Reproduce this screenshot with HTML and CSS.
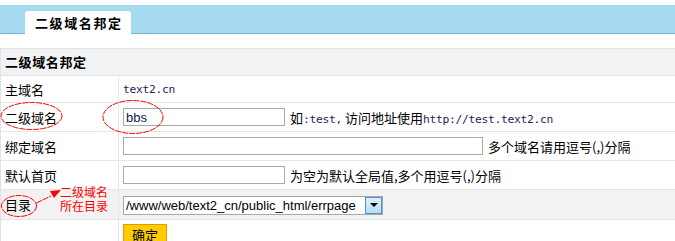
FILE: index.html
```html
<!DOCTYPE html>
<html lang="zh">
<head>
<meta charset="utf-8">
<title>二级域名邦定</title>
<link rel="stylesheet" href="styles.css">
</head>
<body>
<div class="page">
  <div class="topbar"><div class="tab">二级域名邦定</div></div>
  <div class="panel">
    <div class="panel-head">二级域名邦定</div>
    <div class="row r1">
      <div class="label">主域名</div>
      <div class="field"><span class="en">text2.cn</span></div>
    </div>
    <div class="row r2">
      <div class="label">二级域名</div>
      <div class="field"><input class="text short" type="text" value="bbs"><span class="hint">如<span class="en">:test,</span> 访问地址使用<span class="en">http://test.text2.cn</span></span></div>
    </div>
    <div class="row r3">
      <div class="label">绑定域名</div>
      <div class="field"><input class="text long" type="text" value=""><span class="hint">多个域名请用逗号(,)分隔</span></div>
    </div>
    <div class="row r4">
      <div class="label">默认首页</div>
      <div class="field"><input class="text short2" type="text" value=""><span class="hint">为空为默认全局值,多个用逗号(,)分隔</span></div>
    </div>
    <div class="row r5 alt">
      <div class="label">目录</div>
      <div class="field">
        <div class="select"><span class="select-value">/www/web/text2_cn/public_html/errpage</span><span class="select-btn"><span class="caret"></span></span></div>
      </div>
    </div>
    <div class="row r6">
      <div class="label"></div>
      <div class="field top"><button class="submit" type="button">确定</button></div>
    </div>
  </div>

  <svg class="marks" width="675" height="241" viewBox="0 0 675 241" xmlns="http://www.w3.org/2000/svg">
    <g fill="none" stroke="#ff0000" stroke-width="1" stroke-dasharray="6 1">
      <ellipse cx="31.5" cy="116" rx="30.5" ry="13.5"/>
      <ellipse cx="133" cy="117" rx="30" ry="16.5"/>
      <ellipse cx="19" cy="206" rx="17.5" ry="10.5"/>
      <path d="M36.5 203 L51 196"/>
    </g>
    <polygon points="50,191 61,190 54,198" fill="#ff0000"/>
  </svg>
  <div class="note">二级域名<br>所在目录</div>
</div>
</body>
</html>
```

FILE: styles.css
```css
* { box-sizing: border-box; }

html, body {
  margin: 0;
  padding: 0;
  background: #ffffff;
}

body {
  font-family: "Noto Sans CJK SC", "DejaVu Sans", sans-serif;
  font-size: 13px;
  color: #000000;
  overflow: hidden;
}

.page {
  position: relative;
  width: 675px;
  height: 241px;
  overflow: hidden;
}

.topbar {
  margin-top: 5px;
  height: 29px;
  background: #a5d9ef;
  border-bottom: 1px solid #70b7da;
  display: flex;
  align-items: flex-end;
  padding-left: 25px;
}

.tab {
  height: 23px;
  width: 106px;
  margin-bottom: -1px;
  background: #ffffff;
  border-radius: 3px 3px 0 0;
  font-weight: bold;
  font-size: 13px;
  letter-spacing: 1.6px;
  line-height: 23px;
  padding-left: 10px;
  white-space: nowrap;
}

.panel {
  margin-top: 14px;
  width: 676px;
  border-left: 1px solid #dfe2e7;
}

.panel-head {
  height: 28px;
  background: #f1f2f4;
  border-top: 1px solid #dfe2e7;
  border-bottom: 1px solid #dfe2e7;
  font-weight: bold;
  padding-left: 4px;
  line-height: 26px;
  letter-spacing: 0.6px;
}

.row {
  display: grid;
  grid-template-columns: 118px 1fr;
  border-bottom: 1px solid #e3e6eb;
}

.r1 { height: 27px; }
.r2, .r3, .r4 { height: 29px; }
.r5 { height: 30px; }
.r6 { height: 30px; border-bottom: none; }

.alt { background: #f2f2f2; }

.label {
  border-right: 1px solid #e3e6eb;
  padding-left: 4px;
  display: flex;
  align-items: center;
  white-space: nowrap;
}

.field {
  padding-left: 4px;
  display: flex;
  align-items: center;
  white-space: nowrap;
}

.field.top {
  align-items: flex-start;
  padding-top: 4px;
}

.en {
  font-family: "DejaVu Sans Mono", "Liberation Mono", monospace;
  font-size: 11.3px;
  letter-spacing: -0.3px;
  color: #1c2356;
}

.text {
  height: 18px;
  border: 1px solid #a9a9a9;
  background: #ffffff;
  padding: 0 2px;
  margin: 0;
  font-family: "Liberation Sans", Arial, sans-serif;
  font-size: 13px;
  color: #0e2048;
  outline: none;
}

.short { width: 162px; }
.long { width: 360px; }
.short2 { width: 162px; }

.hint {
  margin-left: 5px;
}

.select {
  width: 260px;
  height: 19px;
  border: 1px solid #a3a9b3;
  background: #ffffff;
  display: flex;
  align-items: stretch;
  margin-top: 1px;
}

.select-value {
  flex: 1;
  font-family: "Liberation Sans", Arial, sans-serif;
  font-size: 13px;
  line-height: 17px;
  padding-left: 2px;
  color: #000000;
  overflow: hidden;
}

.select-btn {
  width: 17px;
  border: 1px solid #5a8fc2;
  background: linear-gradient(#dcf0fd, #b5ddf7);
  display: flex;
  align-items: center;
  justify-content: center;
}

.caret {
  width: 0;
  height: 0;
  border-left: 4px solid transparent;
  border-right: 4px solid transparent;
  border-top: 4px solid #000000;
}

.submit {
  width: 44px;
  height: 21px;
  margin: 0;
  padding: 0;
  background: #ffcc00;
  border: 1px solid #e39a00;
  font-family: "Noto Sans CJK SC", sans-serif;
  font-size: 13px;
  line-height: 19px;
  color: #000000;
}

.marks {
  position: absolute;
  left: 0;
  top: 0;
  pointer-events: none;
}

.note {
  position: absolute;
  left: 60px;
  top: 185px;
  font-size: 12px;
  line-height: 14px;
  color: #ff0000;
  white-space: nowrap;
}
```
